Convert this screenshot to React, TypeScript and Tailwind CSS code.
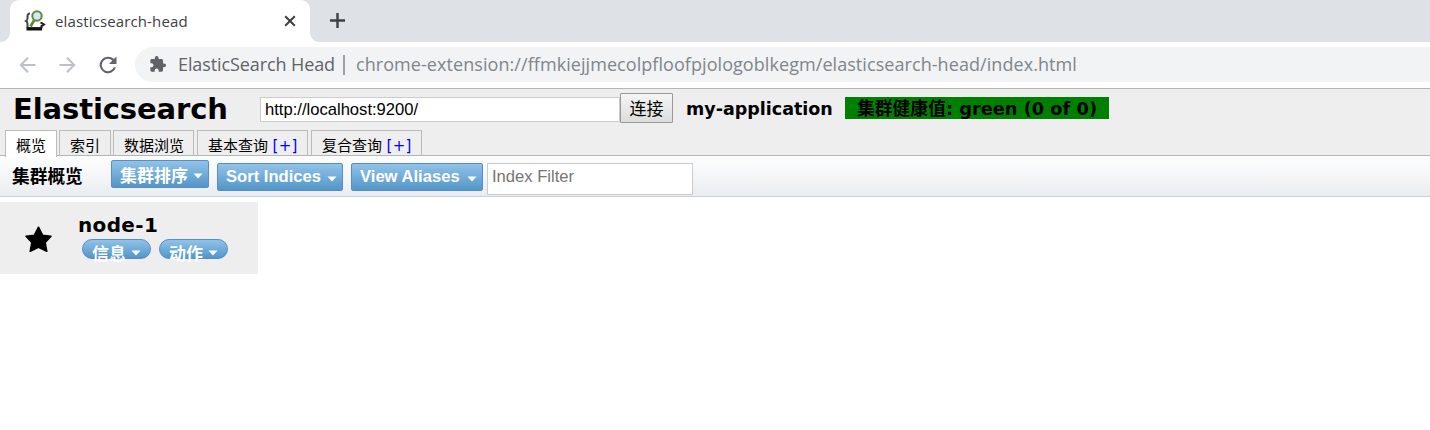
import type { ReactNode } from "react";

function Caret({ className = "" }: { className?: string }) {
  return (
    <svg className={`shrink-0 ${className}`} width="10" height="6" viewBox="0 0 10 6" fill="#fff">
      <path d="M.5 .5h9L5 5.5z" />
    </svg>
  );
}

function MenuButton({ children, className = "" }: { children: ReactNode; className?: string }) {
  return (
    <button
      className={`flex h-7 shrink-0 items-start justify-between whitespace-nowrap rounded-[2px] border border-[#5d8bc8] bg-linear-to-b from-[#90c3e8] to-[#5296c8] pl-2 pr-[5px] font-bold text-white ${className}`}
    >
      {children}
      <Caret className="mt-[12px]" />
    </button>
  );
}

function PillButton({ children }: { children: ReactNode }) {
  return (
    <button className="flex h-5 w-[69px] items-start rounded-full border border-[#5d8bc8] bg-linear-to-b from-[#90c3e8] to-[#5296c8] pl-[9px] text-[17px] font-bold text-white">
      <span className="mt-[2px] h-6 w-[34px] leading-[25px]">{children}</span>
      <Caret className="ml-[5px] mt-[10px]" />
    </button>
  );
}

function ViewTab({ children, className = "" }: { children: ReactNode; className?: string }) {
  return (
    <div
      className={`h-[26px] shrink-0 whitespace-nowrap border border-b-0 border-[#bbb] pl-[10px] pt-[2px] text-[15px] leading-[24px] ${className}`}
    >
      {children}
    </div>
  );
}

function ExtensionIcon() {
  return (
    <svg width="22" height="22" viewBox="0 0 22 22" fill="none">
      <path d="M6 3.500C3.500 3.500 3.500 5 3.500 8c0 2-.3 2.500-1.300 3 1 .5 1.300 1 1.300 3v4" stroke="#444" strokeWidth="2" />
      <path d="M2.500 18.800h15.500" stroke="#111" strokeWidth="3.400" />
      <path d="M17.500 18.500V16l2.300-1.500-2.300-1.500v-1" stroke="#222" strokeWidth="2.200" />
      <path d="M10 10.500 6.500 16.500" stroke="#5d8a38" strokeWidth="2.800" />
      <circle cx="13" cy="6" r="4.700" fill="#d6e6f8" stroke="#5d8a38" strokeWidth="2" />
    </svg>
  );
}

function BrowserChrome() {
  return (
    <div className="font-['Open_Sans','Noto_Sans_CJK_SC',sans-serif]">
      <div className="flex h-[42px] bg-[#dee1e6]">
        <svg width="10" height="42" viewBox="0 0 10 42" fill="#fff">
          <path d="M10 32v10H0c6 0 10-4 10-10z" />
        </svg>
        <div className="flex h-[42px] w-[300px] items-center rounded-t-[9px] bg-white pl-[14px]">
          <ExtensionIcon />
          <span className="ml-[9px] w-[133px] whitespace-nowrap text-[15px] tracking-[0.13px] text-[#3c4043]">elasticsearch-head</span>
          <svg className="ml-[96px]" width="12" height="12" viewBox="0 0 12 12" stroke="#3c4043" strokeWidth="2">
            <path d="m1.200 1.200 9.600 9.600m0-9.600-9.600 9.600" />
          </svg>
        </div>
        <svg width="10" height="42" viewBox="0 0 10 42" fill="#fff">
          <path d="M0 32v10h10C4 42 0 38 0 32z" />
        </svg>
        <svg className="ml-[10px] mt-[13px]" width="15" height="15" viewBox="0 0 15 15" stroke="#3c4043" strokeWidth="2.400">
          <path d="M7.500 0v15M0 7.500h15" />
        </svg>
      </div>
      <div className="flex h-[46px] items-start bg-white pl-[19px]">
        <svg className="mt-[15px]" width="17" height="16" viewBox="0 0 17 16" fill="none" stroke="#bdc1c6" strokeWidth="2">
          <path d="M16.500 8H2M9 .8 1.800 8 9 15.200" />
        </svg>
        <svg className="ml-[23px] mt-[15px]" width="17" height="16" viewBox="0 0 17 16" fill="none" stroke="#bdc1c6" strokeWidth="2">
          <path d="M.5 8H15M8 .8 15.200 8 8 15.200" />
        </svg>
        <svg className="ml-[20px] mt-[11px]" width="24" height="24" viewBox="0 0 24 24" fill="#5f6368">
          <path d="M17.900 6.100A8.300 8.300 0 1 0 20 14.200h-2.200a6.200 6.200 0 1 1-1.400-6.600L13 11h7.500V3.500z" />
        </svg>
        <div className="ml-[15px] mt-[5px] flex h-[35px] flex-1 items-center rounded-l-full bg-[#f1f3f4] pl-[15px] text-[18px]">
          <svg className="mb-[2px]" width="16" height="16" viewBox="1.500 1 21.500 21.500" fill="#5f6368">
            <path d="M20.500 11H19V7c0-1.100-.9-2-2-2h-4V3.500a2.500 2.500 0 0 0-5 0V5H4c-1.100 0-2 .9-2 2v3.800h1.500a2.700 2.700 0 0 1 0 5.400H2V20c0 1.100.9 2 2 2h3.800v-1.500a2.700 2.700 0 0 1 5.400 0V22H17c1.100 0 2-.9 2-2v-4h1.500a2.500 2.500 0 0 0 0-5z" />
          </svg>
          <span className="ml-[12px] w-[157px] shrink-0 whitespace-nowrap tracking-[-0.1px] text-[#5f6368]">ElasticSearch Head</span>
          <span className="ml-[8px] h-5 w-[2px] bg-[#9aa0a6]" />
          <span className="ml-[11px] whitespace-nowrap tracking-[0.065px] text-[#80868b]">
            chrome-extension://ffmkiejjmecolpfloofpjologoblkegm/elasticsearch-head/index.html
          </span>
        </div>
      </div>
    </div>
  );
}

function ClusterHeader() {
  return (
    <header className="h-[68px] border-y border-[#b5b5b5] bg-[#eee]">
      <div className="flex h-[41px] items-start pl-[13px] font-['DejaVu_Sans','Noto_Sans_CJK_SC',sans-serif] font-bold">
        <h1 className="w-[247px] shrink-0 whitespace-nowrap text-[29px] leading-[40px] tracking-[-0.1px]">Elasticsearch</h1>
        <input
          className="mt-[8px] h-[25px] w-[360px] border border-[#ccc] bg-white px-1 font-['Liberation_Sans',sans-serif] text-[16.600px] font-normal outline-none"
          defaultValue="http://localhost:9200/"
        />
        <button className="mt-[4px] h-[30px] w-[53px] rounded-[1px] border border-[#999] bg-linear-to-b from-[#f5f5f5] to-[#ddd] text-[17px] font-normal leading-[30px]">
          连接
        </button>
        <span className="ml-[13px] w-[159px] shrink-0 whitespace-nowrap text-[17.500px] leading-[41px]">my-application</span>
        <span className="mt-[8px] h-[22px] w-[264px] whitespace-nowrap bg-[green] pl-[12px] text-[17.800px] leading-[24px]">
          集群健康值: green (0 of 0)
        </span>
      </div>
      <nav className="flex pl-[5px] font-['Noto_Sans_CJK_SC',sans-serif]">
        <ViewTab className="relative z-10 h-[27px] w-[52px] bg-white">概览</ViewTab>
        <ViewTab className="ml-[2px] w-[52px]">索引</ViewTab>
        <ViewTab className="ml-[2px] w-[81px]">数据浏览</ViewTab>
        <ViewTab className="ml-[3px] w-[111px]">
          基本查询 <span className="ml-[1px] font-['DejaVu_Sans'] tracking-[0.4px] text-[#00f]">[+]</span>
        </ViewTab>
        <ViewTab className="ml-[3px] w-[111px]">
          复合查询 <span className="ml-[1px] font-['DejaVu_Sans'] tracking-[0.4px] text-[#00f]">[+]</span>
        </ViewTab>
      </nav>
    </header>
  );
}

function OverviewToolbar() {
  return (
    <div className="flex h-[41px] items-start border-b border-[#ccd0d4] bg-linear-to-b from-[#fdfefe] to-[#eaedf0] pl-[12px] font-['Liberation_Sans','Noto_Sans_CJK_SC',sans-serif]">
      <h2 className="w-[99px] text-[17.700px] font-bold leading-[42px]">集群概览</h2>
      <MenuButton className="mt-[4px] w-[98px] text-[17px] leading-[32px]">集群排序</MenuButton>
      <MenuButton className="ml-[8px] mt-[7px] w-[126px] text-[16.600px] leading-[25px]">Sort Indices</MenuButton>
      <MenuButton className="ml-[8px] mt-[7px] w-[132px] text-[16.600px] leading-[25px]">View Aliases</MenuButton>
      <input
        className="ml-[4px] mt-[7px] h-8 w-[206px] border border-[#ccc] bg-white pb-[5px] pl-1 text-[16.600px] outline-none placeholder:text-[#757575]"
        placeholder="Index Filter"
      />
    </div>
  );
}

function NodeCard() {
  return (
    <div className="mt-[5px] flex h-[72px] w-[258px] bg-[#eee]">
      <svg className="ml-[25px] mt-[24px]" width="27" height="27" viewBox="0 0 27 27">
        <path d="M13.500 1.200 17.600 9.200l8.400 1-5.800 6.300 1.600 8.800-8.300-4-8.300 4 1.600-8.800L1 10.200l8.400-1z" stroke="#000" strokeLinejoin="round" strokeWidth="1.500" />
      </svg>
      <div className="ml-[26px]">
        <div className="h-[37px] whitespace-nowrap pt-[10px] font-['DejaVu_Sans',sans-serif] text-[20px] font-bold leading-[26px] tracking-[0.35px]">node-1</div>
        <div className="flex gap-2 pl-1 font-['Liberation_Sans','Noto_Sans_CJK_SC',sans-serif]">
          <PillButton>信息</PillButton>
          <PillButton>动作</PillButton>
        </div>
      </div>
    </div>
  );
}

export default function App() {
  return (
    <div className="h-[430px] w-[1430px] overflow-hidden bg-white text-black">
      <BrowserChrome />
      <ClusterHeader />
      <OverviewToolbar />
      <NodeCard />
    </div>
  );
}
